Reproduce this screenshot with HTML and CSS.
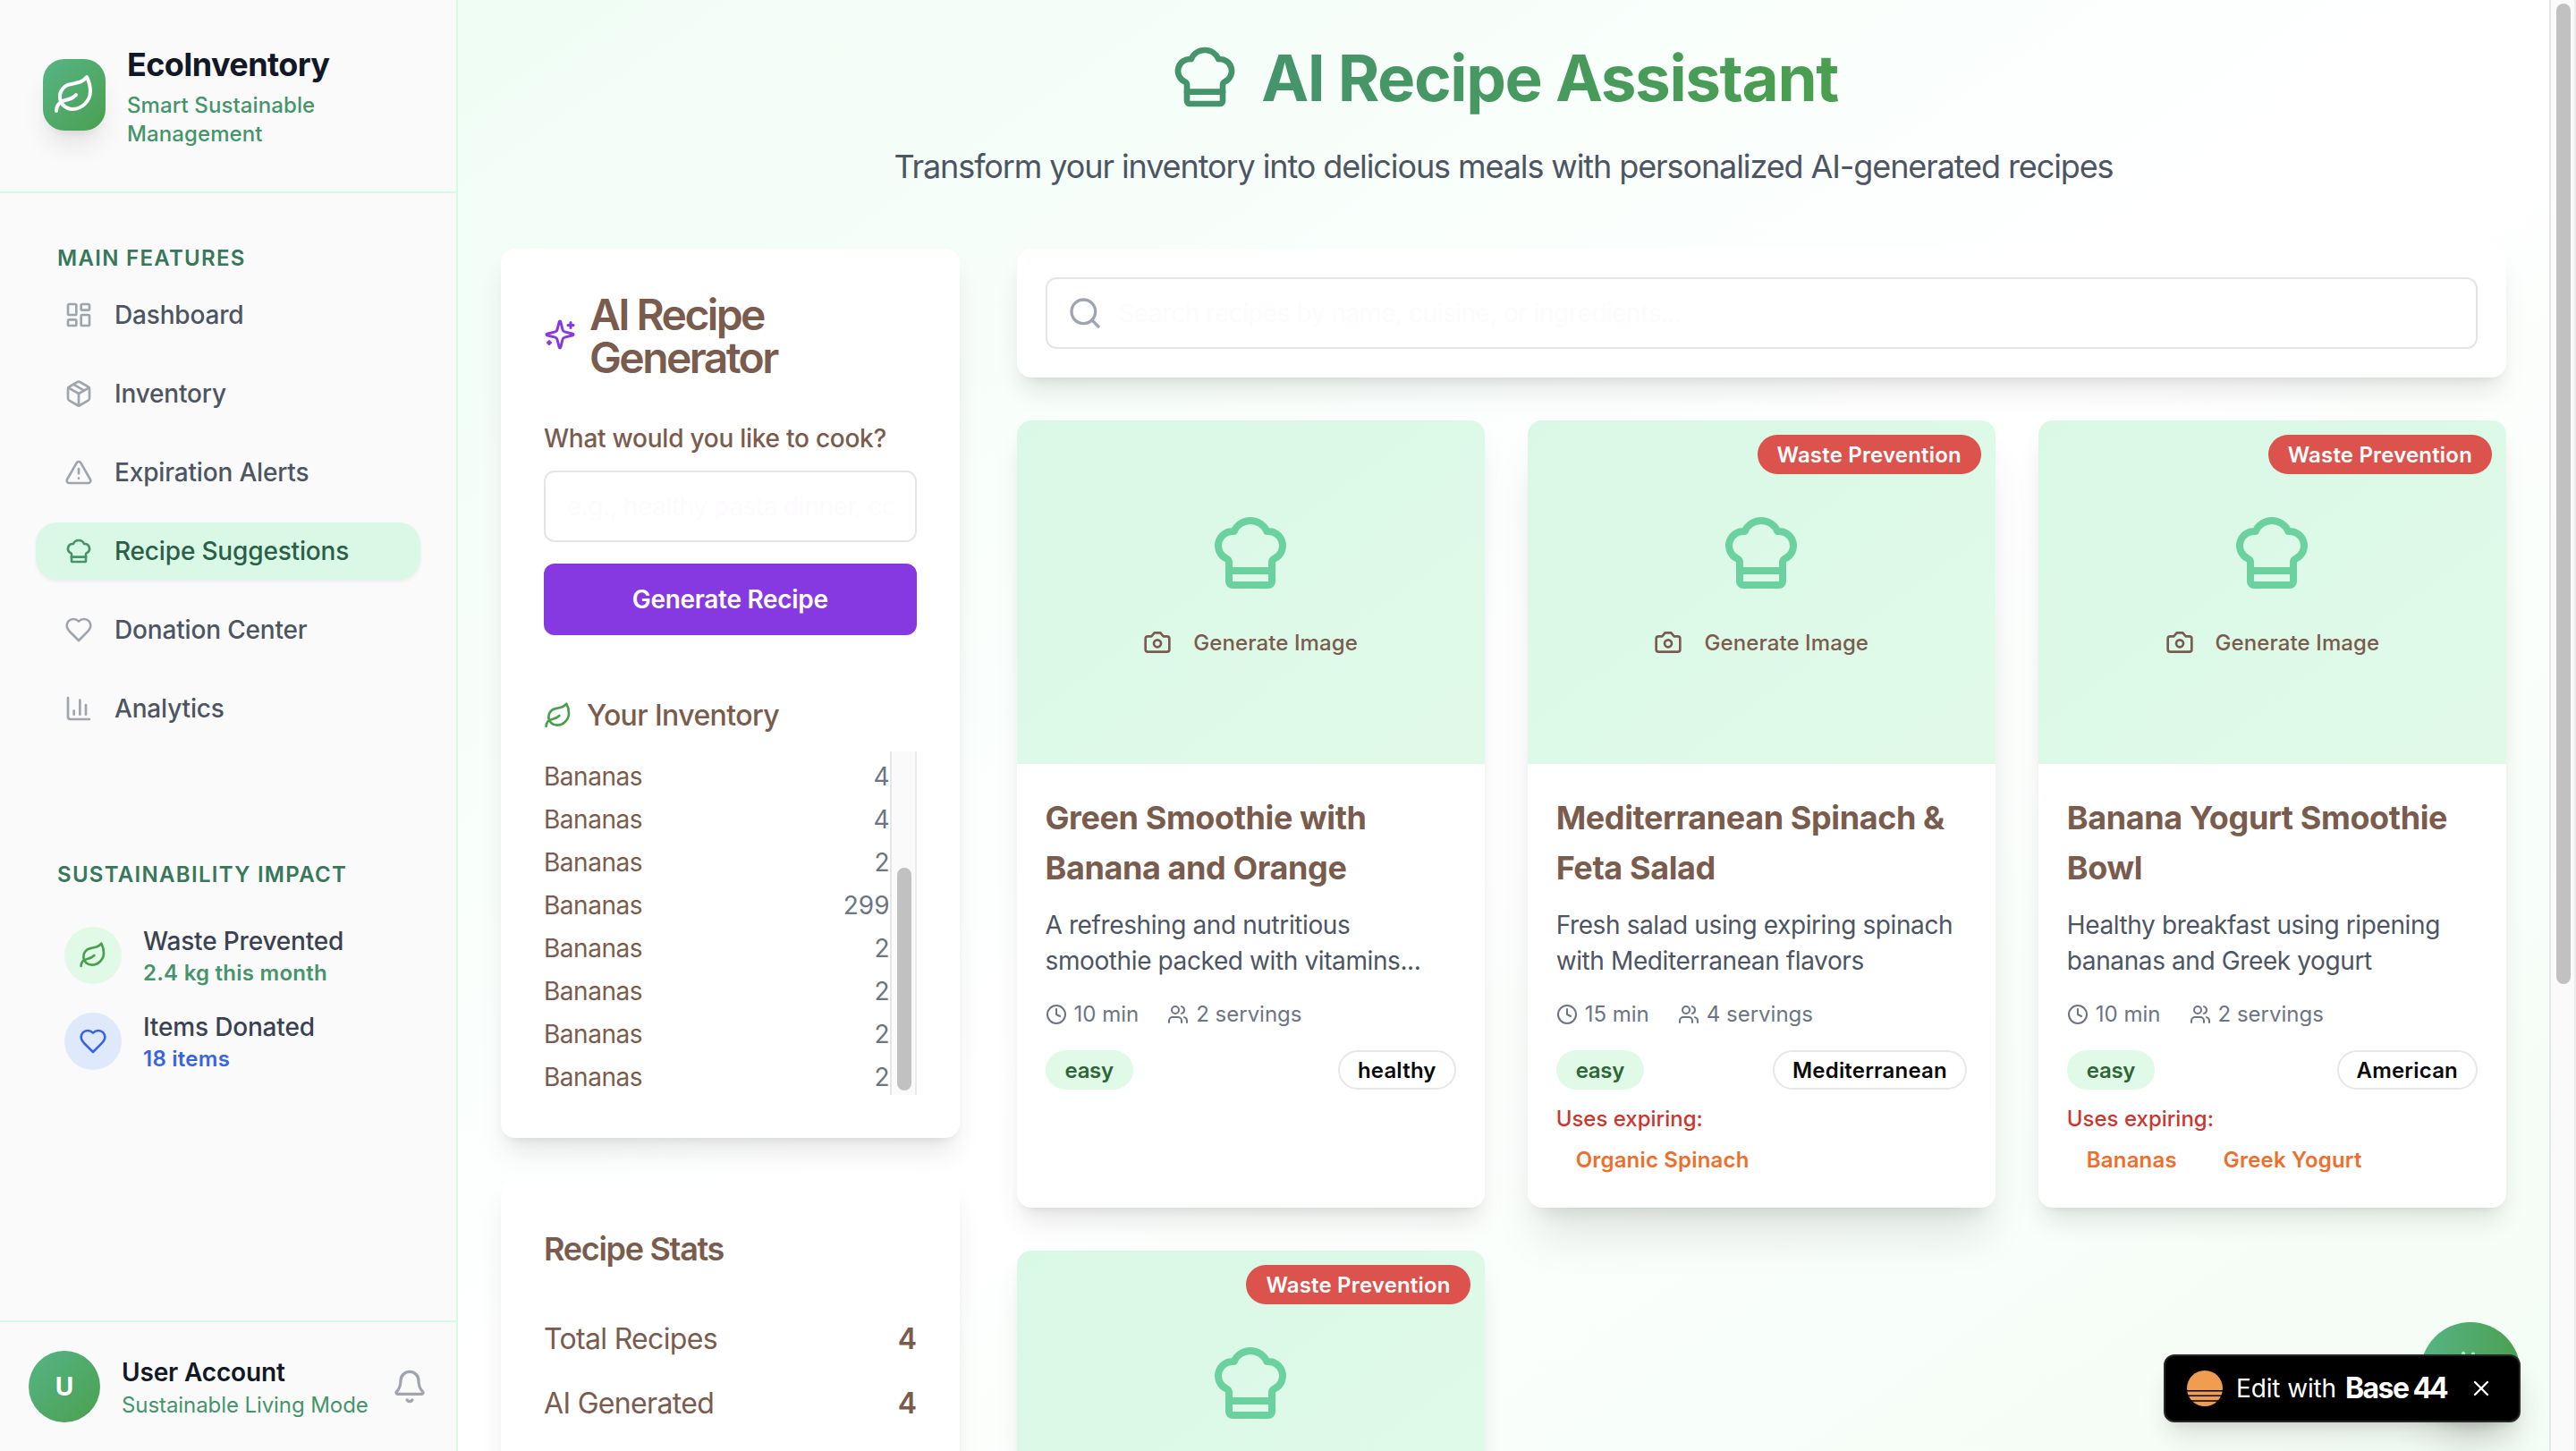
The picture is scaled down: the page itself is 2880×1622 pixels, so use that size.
FILE: index.html
```html
<!DOCTYPE html>
<html lang="en">
<head>
  <meta charset="UTF-8" />
  <meta name="viewport" content="width=device-width, initial-scale=1.0"/>
  <title>EcoInventory - AI Recipe Assistant</title>
  <link rel="stylesheet" href="styles.css">
</head>
<body>
  <!-- Shared icons -->
  <svg class="sprite" aria-hidden="true">
    <symbol id="leaf" viewBox="0 0 24 24"><path d="M11 20A7 7 0 0 1 9.8 6.1C15.5 5 17 4.48 19 2c1 2 2 4.18 2 8 0 5.5-4.78 10-10 10Z"/><path d="M2 21c0-3 1.85-5.36 5.08-6C9.5 14.52 12 13 13 12"/></symbol>
    <symbol id="dashboard" viewBox="0 0 24 24"><rect x="3" y="3" width="7" height="9" rx="1"/><rect x="14" y="3" width="7" height="5" rx="1"/><rect x="14" y="12" width="7" height="9" rx="1"/><rect x="3" y="16" width="7" height="5" rx="1"/></symbol>
    <symbol id="package" viewBox="0 0 24 24"><path d="m7.5 4.27 9 5.15"/><path d="M21 8a2 2 0 0 0-1-1.73l-7-4a2 2 0 0 0-2 0l-7 4A2 2 0 0 0 3 8v8a2 2 0 0 0 1 1.73l7 4a2 2 0 0 0 2 0l7-4A2 2 0 0 0 21 16Z"/><path d="m3.3 7 8.7 5 8.7-5"/><path d="M12 22V12"/></symbol>
    <symbol id="alert" viewBox="0 0 24 24"><path d="m21.73 18-8-14a2 2 0 0 0-3.48 0l-8 14A2 2 0 0 0 4 21h16a2 2 0 0 0 1.73-3"/><path d="M12 9v4"/><path d="M12 17h.01"/></symbol>
    <symbol id="chef" viewBox="0 0 24 24"><path d="M17 21a1 1 0 0 0 1-1v-5.35c0-.457.316-.844.727-1.041a4 4 0 0 0-2.134-7.589 5 5 0 0 0-9.186 0 4 4 0 0 0-2.134 7.588c.411.198.727.585.727 1.041V20a1 1 0 0 0 1 1Z"/><path d="M6 17h12"/></symbol>
    <symbol id="heart" viewBox="0 0 24 24"><path d="M19 14c1.49-1.46 3-3.21 3-5.5A5.5 5.5 0 0 0 16.5 3c-1.76 0-3 .5-4.5 2-1.5-1.5-2.74-2-4.5-2A5.5 5.5 0 0 0 2 8.5c0 2.3 1.5 4.05 3 5.5l7 7Z"/></symbol>
    <symbol id="chart" viewBox="0 0 24 24"><path d="M3 3v16a2 2 0 0 0 2 2h16"/><path d="M18 17V9"/><path d="M13 17V5"/><path d="M8 17v-3"/></symbol>
    <symbol id="bell" viewBox="0 0 24 24"><path d="M10.268 21a2 2 0 0 0 3.464 0"/><path d="M3.262 15.326A1 1 0 0 0 4 17h16a1 1 0 0 0 .74-1.673C19.41 13.956 18 12.499 18 8A6 6 0 0 0 6 8c0 4.499-1.411 5.956-2.738 7.326"/></symbol>
    <symbol id="sparkles" viewBox="0 0 24 24"><path d="M9.937 15.5A2 2 0 0 0 8.5 14.063l-6.135-1.582a.5.5 0 0 1 0-.962L8.5 9.936A2 2 0 0 0 9.937 8.5l1.582-6.135a.5.5 0 0 1 .963 0L14.063 8.5A2 2 0 0 0 15.5 9.937l6.135 1.581a.5.5 0 0 1 0 .964L15.5 14.063a2 2 0 0 0-1.437 1.437l-1.582 6.135a.5.5 0 0 1-.963 0z"/><path d="M20 3v4"/><path d="M22 5h-4"/><path d="M4 17v2"/><path d="M5 18H3"/></symbol>
    <symbol id="search" viewBox="0 0 24 24"><circle cx="11" cy="11" r="8"/><path d="m21 21-4.3-4.3"/></symbol>
    <symbol id="camera" viewBox="0 0 24 24"><path d="M14.5 4h-5L7 7H4a2 2 0 0 0-2 2v9a2 2 0 0 0 2 2h16a2 2 0 0 0 2-2V9a2 2 0 0 0-2-2h-3l-2.5-3z"/><circle cx="12" cy="13" r="3"/></symbol>
    <symbol id="clock" viewBox="0 0 24 24"><circle cx="12" cy="12" r="10"/><path d="M12 6v6l4 2"/></symbol>
    <symbol id="users" viewBox="0 0 24 24"><path d="M16 21v-2a4 4 0 0 0-4-4H6a4 4 0 0 0-4 4v2"/><circle cx="9" cy="7" r="4"/><path d="M22 21v-2a4 4 0 0 0-3-3.87"/><path d="M16 3.13a4 4 0 0 1 0 7.75"/></symbol>
    <symbol id="close" viewBox="0 0 24 24"><path d="M18 6 6 18"/><path d="m6 6 12 12"/></symbol>
  </svg>

  <div class="layout">
    <aside class="sidebar">
      <div class="brand">
        <div class="brand-logo"><svg class="icon"><use href="#leaf"/></svg></div>
        <div>
          <h2>EcoInventory</h2>
          <p>Smart Sustainable<br>Management</p>
        </div>
      </div>

      <div class="sidebar-content">
        <div class="group-label">MAIN FEATURES</div>
        <nav>
          <a class="nav-item"><svg class="icon"><use href="#dashboard"/></svg>Dashboard</a>
          <a class="nav-item"><svg class="icon"><use href="#package"/></svg>Inventory</a>
          <a class="nav-item"><svg class="icon"><use href="#alert"/></svg>Expiration Alerts</a>
          <a class="nav-item active"><svg class="icon"><use href="#chef"/></svg>Recipe Suggestions</a>
          <a class="nav-item"><svg class="icon"><use href="#heart"/></svg>Donation Center</a>
          <a class="nav-item"><svg class="icon"><use href="#chart"/></svg>Analytics</a>
        </nav>

        <div class="group-label impact-label">SUSTAINABILITY IMPACT</div>
        <div class="impact-list">
          <div class="impact">
            <div class="impact-icon green"><svg class="icon"><use href="#leaf"/></svg></div>
            <div>
              <p class="impact-name">Waste Prevented</p>
              <p class="impact-value">2.4 kg this month</p>
            </div>
          </div>
          <div class="impact">
            <div class="impact-icon blue"><svg class="icon"><use href="#heart"/></svg></div>
            <div>
              <p class="impact-name">Items Donated</p>
              <p class="impact-value blue-text">18 items</p>
            </div>
          </div>
        </div>
      </div>

      <div class="account">
        <div class="avatar">U</div>
        <div class="account-info">
          <p class="account-name">User Account</p>
          <p class="account-mode">Sustainable Living Mode</p>
        </div>
        <svg class="icon bell"><use href="#bell"/></svg>
      </div>
    </aside>

    <main>
      <header class="page-header">
        <h1><svg class="icon"><use href="#chef"/></svg><span>AI Recipe Assistant</span></h1>
        <p>Transform your inventory into delicious meals with personalized AI-generated recipes</p>
      </header>

      <div class="columns">
        <div class="left-col">
          <section class="card generator">
            <h3 class="generator-title"><svg class="icon"><use href="#sparkles"/></svg><span>AI Recipe<br>Generator</span></h3>
            <label for="prompt">What would you like to cook?</label>
            <input type="text" id="prompt" placeholder="e.g., healthy pasta dinner, comfort food" />
            <button class="generate-btn">Generate Recipe</button>
            <h4><svg class="icon"><use href="#leaf"/></svg>Your Inventory</h4>
            <div class="inventory">
              <div class="inventory-list">
                <div class="row"><span>Bananas</span><span class="qty">4</span></div>
                <div class="row"><span>Bananas</span><span class="qty">4</span></div>
                <div class="row"><span>Bananas</span><span class="qty">2</span></div>
                <div class="row"><span>Bananas</span><span class="qty">299</span></div>
                <div class="row"><span>Bananas</span><span class="qty">2</span></div>
                <div class="row"><span>Bananas</span><span class="qty">2</span></div>
                <div class="row"><span>Bananas</span><span class="qty">2</span></div>
                <div class="row"><span>Bananas</span><span class="qty">2</span></div>
              </div>
              <div class="track inventory-track"><div class="thumb"></div></div>
            </div>
          </section>

          <section class="card stats">
            <h3>Recipe Stats</h3>
            <div class="stat"><span>Total Recipes</span><b>4</b></div>
            <div class="stat"><span>AI Generated</span><b>4</b></div>
          </section>
        </div>

        <div class="right-col">
          <section class="card search-card">
            <div class="search-box">
              <svg class="icon"><use href="#search"/></svg>
              <input type="text" placeholder="Search recipes by name, cuisine, or ingredients..." />
            </div>
          </section>

          <div class="recipes">
            <article class="card recipe">
              <div class="photo">
                <svg class="icon hat"><use href="#chef"/></svg>
                <button class="image-btn"><svg class="icon"><use href="#camera"/></svg>Generate Image</button>
              </div>
              <div class="recipe-body">
                <h3>Green Smoothie with<br>Banana and Orange</h3>
                <p class="desc">A refreshing and nutritious<br>smoothie packed with vitamins...</p>
                <div class="meta">
                  <span><svg class="icon"><use href="#clock"/></svg>10 min</span>
                  <span><svg class="icon"><use href="#users"/></svg>2 servings</span>
                </div>
                <div class="tags"><span class="badge easy">easy</span><span class="badge outline">healthy</span></div>
              </div>
            </article>

            <article class="card recipe hovered">
              <div class="photo">
                <span class="badge waste">Waste Prevention</span>
                <svg class="icon hat"><use href="#chef"/></svg>
                <button class="image-btn"><svg class="icon"><use href="#camera"/></svg>Generate Image</button>
              </div>
              <div class="recipe-body">
                <h3>Mediterranean Spinach &amp;<br>Feta Salad</h3>
                <p class="desc">Fresh salad using expiring spinach<br>with Mediterranean flavors</p>
                <div class="meta">
                  <span><svg class="icon"><use href="#clock"/></svg>15 min</span>
                  <span><svg class="icon"><use href="#users"/></svg>4 servings</span>
                </div>
                <div class="tags"><span class="badge easy">easy</span><span class="badge outline">Mediterranean</span></div>
                <p class="expiring">Uses expiring:</p>
                <div class="expiring-items"><span class="badge">Organic Spinach</span></div>
              </div>
            </article>

            <article class="card recipe">
              <div class="photo">
                <span class="badge waste">Waste Prevention</span>
                <svg class="icon hat"><use href="#chef"/></svg>
                <button class="image-btn"><svg class="icon"><use href="#camera"/></svg>Generate Image</button>
              </div>
              <div class="recipe-body">
                <h3>Banana Yogurt Smoothie<br>Bowl</h3>
                <p class="desc">Healthy breakfast using ripening<br>bananas and Greek yogurt</p>
                <div class="meta">
                  <span><svg class="icon"><use href="#clock"/></svg>10 min</span>
                  <span><svg class="icon"><use href="#users"/></svg>2 servings</span>
                </div>
                <div class="tags"><span class="badge easy">easy</span><span class="badge outline">American</span></div>
                <p class="expiring">Uses expiring:</p>
                <div class="expiring-items"><span class="badge">Bananas</span><span class="badge">Greek Yogurt</span></div>
              </div>
            </article>

            <article class="card recipe">
              <div class="photo">
                <span class="badge waste">Waste Prevention</span>
                <svg class="icon hat"><use href="#chef"/></svg>
                <div class="image-btn"></div>
              </div>
            </article>
          </div>
        </div>
      </div>
    </main>

    <div class="track page-track"><div class="thumb"></div></div>
  </div>

  <button class="fab">
    <svg viewBox="0 0 24 24"><path d="M8 1.4 9 5"/><path d="M13.5 1.8 13 5"/></svg>
  </button>

  <div class="edit-badge">
    <svg class="edit-logo" viewBox="0 0 40 40">
      <circle cx="20" cy="20" r="20" fill="#f09d51"/>
      <path d="M0 22.7h40M0 28.3h40M0 33.9h40" stroke="#000" stroke-width="1.5"/>
    </svg>
    <span class="edit-text">Edit with</span>
    <span class="edit-brand">Base<span>44</span></span>
    <svg class="icon edit-close"><use href="#close"/></svg>
  </div>
</body>
</html>
```
FILE: styles.css
```css
* {
  box-sizing: border-box;
}
body {
  font-family: Inter, "Liberation Sans", sans-serif;
  font-size: 28px;
  line-height: 40px;
  margin: 0;
  height: 100vh;
  overflow: hidden;
  color: #7a5c4e;
}
h1, h2, h3, h4, p {
  margin: 0;
}
button, input {
  font-family: inherit;
  font-size: 28px;
}
.sprite {
  display: none;
}
.icon {
  width: 32px;
  height: 32px;
  flex-shrink: 0;
  fill: none;
  stroke: currentColor;
  stroke-width: 2;
  stroke-linecap: round;
  stroke-linejoin: round;
}
.layout {
  display: flex;
  height: 100vh;
  overflow: hidden;
}

/* Sidebar */
.sidebar {
  width: 512px;
  flex-shrink: 0;
  display: flex;
  flex-direction: column;
  background: #fafafa;
  border-right: 2px solid #d9f8e6;
}
.brand {
  display: flex;
  align-items: center;
  gap: 24px;
  height: 216px;
  padding: 46px 48px 48px;
  border-bottom: 2px solid #d9f8e6;
}
.brand-logo {
  width: 70px;
  height: 80px;
  flex-shrink: 0;
  display: flex;
  align-items: center;
  justify-content: center;
  border-radius: 24px;
  color: white;
  background: linear-gradient(135deg, #56b586, #4a9f4f);
  box-shadow: 0 20px 30px -6px rgba(0,0,0,0.1), 0 8px 12px -8px rgba(0,0,0,0.1);
}
.brand-logo .icon {
  width: 48px;
  height: 48px;
}
.brand h2 {
  font-size: 36px;
  line-height: 52px;
  font-weight: 700;
  letter-spacing: -0.6px;
  color: #131826;
}
.brand p {
  margin-top: 4px;
  font-size: 24px;
  line-height: 32px;
  font-weight: 500;
  letter-spacing: 0.1px;
  color: #45946c;
}
.sidebar-content {
  flex: 1;
  padding: 40px;
}
.group-label {
  height: 64px;
  padding: 0 24px;
  line-height: 66px;
  font-size: 24px;
  font-weight: 600;
  letter-spacing: 1.3px;
  color: #37785a;
}
.nav-item {
  display: flex;
  align-items: center;
  gap: 24px;
  height: 64px;
  margin-bottom: 24px;
  padding: 0 32px;
  border-radius: 24px;
  font-weight: 500;
  letter-spacing: -0.17px;
  color: #4d5562;
}
.nav-item .icon {
  color: #9fa4ae;
}
.nav-item.active {
  background: #d9f8e6;
  color: #2b5f48;
  box-shadow: 0 2px 4px rgba(0,0,0,0.06);
}
.nav-item.active .icon {
  color: #45946c;
}
.impact-label {
  margin-top: 121px;
}
.impact-list {
  display: flex;
  flex-direction: column;
  gap: 24px;
  padding: 23px 32px;
}
.impact {
  display: flex;
  align-items: center;
  gap: 24px;
}
.impact-icon {
  width: 64px;
  height: 64px;
  display: flex;
  align-items: center;
  justify-content: center;
  border-radius: 50%;
}
.green {
  background: #e1fae8;
  color: #4a9f4f;
}
.blue {
  background: #dee9fc;
  color: #3a63e4;
}
.impact-name {
  font-weight: 500;
  letter-spacing: -0.17px;
  color: #3a4251;
}
.impact-value {
  font-size: 24px;
  line-height: 32px;
  font-weight: 600;
  letter-spacing: 0.25px;
  color: #45946c;
}
.blue-text {
  color: #3a63e4;
}
.account {
  display: flex;
  align-items: center;
  height: 146px;
  padding: 0 32px;
  border-top: 2px solid #d9f8e6;
}
.avatar {
  width: 80px;
  height: 80px;
  border-radius: 50%;
  background: linear-gradient(135deg, #56b586, #4a9f4f);
  color: white;
  font-weight: 700;
  line-height: 80px;
  text-align: center;
}
.account-info {
  flex: 1;
  padding-left: 24px;
}
.account-name {
  font-weight: 600;
  letter-spacing: -0.15px;
  color: #131826;
}
.account-mode {
  font-size: 24px;
  line-height: 33px;
  letter-spacing: -0.08px;
  color: #45946c;
}
.bell {
  width: 40px;
  height: 40px;
  color: #9fa4ae;
}

/* Main */
main {
  flex: 1;
  min-width: 0;
  padding: 46px 48px;
  background: linear-gradient(to bottom right, #effdf5, #fff 50%, #f3fdf5);
}
.page-header {
  text-align: center;
  margin-bottom: 64px;
}
h1 {
  display: flex;
  align-items: center;
  justify-content: center;
  gap: 23px;
  height: 80px;
  margin-bottom: 32px;
  font-size: 71px;
  font-weight: 700;
  letter-spacing: -1.4px;
}
h1 .icon {
  width: 80px;
  height: 80px;
  color: #45946c;
}
h1 span {
  padding-top: 2px;
  line-height: 88px;
  background: linear-gradient(to right, #45946c, #4a9f4f);
  -webkit-background-clip: text;
  background-clip: text;
  color: transparent;
}
.page-header p {
  font-size: 36px;
  line-height: 56px;
  letter-spacing: -1.1px;
  color: #4d5562;
}
.columns {
  display: grid;
  grid-template-columns: repeat(4, 1fr);
  gap: 64px;
}
.card {
  background: white;
  border-radius: 16px;
  box-shadow: 0 20px 30px -6px rgba(0,0,0,0.1), 0 8px 12px -8px rgba(0,0,0,0.1);
}
.left-col {
  display: flex;
  flex-direction: column;
  gap: 48px;
}
.generator, .stats {
  padding: 48px;
}
.stats {
  min-height: 420px;
}
.generator-title {
  display: flex;
  align-items: center;
  gap: 15px;
  margin-bottom: 48px;
  font-size: 48px;
  line-height: 48px;
  font-weight: 600;
  letter-spacing: -2.6px;
}
.generator-title .icon {
  width: 36px;
  height: 36px;
  color: #8639e0;
}
.generator-title span {
  padding-top: 2px;
  margin-bottom: -2px;
}
.generator label {
  display: block;
  margin-bottom: 16px;
  font-weight: 500;
  letter-spacing: -0.25px;
}
input {
  display: block;
  width: 100%;
  height: 80px;
  padding: 0 24px;
  border: 2px solid #e5e5e5;
  border-radius: 12px;
  background: white;
  letter-spacing: -0.45px;
}
input::placeholder {
  color: #fefbfe;
}
.generate-btn {
  width: 100%;
  height: 80px;
  margin: 24px 0 66px;
  border: none;
  border-radius: 12px;
  background: #8639e0;
  color: white;
  font-weight: 600;
  letter-spacing: -0.3px;
}
h4 {
  display: flex;
  align-items: center;
  gap: 16px;
  margin-bottom: 16px;
  font-size: 32px;
  line-height: 48px;
  font-weight: 500;
  letter-spacing: -0.6px;
}
h4 .icon {
  color: #4a9f4f;
}
.inventory {
  display: flex;
  height: 384px;
}
.inventory-list {
  flex: 1;
  display: flex;
  flex-direction: column;
  justify-content: flex-end;
  gap: 8px;
}
.row, .stat {
  display: flex;
  justify-content: space-between;
}
.row {
  letter-spacing: -0.48px;
}
.qty {
  letter-spacing: 0;
  color: #6d7482;
}
.track {
  width: 30px;
  flex-shrink: 0;
  border-left: 2px solid #e6e6e6;
  border-right: 2px solid #ececec;
  background: #fafafa;
}
.thumb {
  width: 16px;
  margin-left: 6px;
  border-radius: 8px;
  background: #c1c1c1;
}
.inventory-track {
  padding-top: 130px;
}
.inventory-track .thumb {
  height: 249px;
}
.page-track {
  padding-top: 4px;
}
.page-track .thumb {
  height: 1096px;
}
.stats h3 {
  margin-bottom: 49px;
  font-size: 36px;
  line-height: 56px;
  font-weight: 600;
  letter-spacing: -1.3px;
}
.stat {
  margin-bottom: 24px;
  font-size: 32px;
  line-height: 48px;
  letter-spacing: -0.67px;
}
.stat b {
  font-weight: 600;
}

/* Recipes */
.right-col {
  grid-column: span 3;
}
.search-card {
  padding: 32px;
  margin-bottom: 48px;
}
.search-box {
  position: relative;
}
.search-box .icon {
  position: absolute;
  left: 24px;
  top: 20px;
  width: 40px;
  height: 40px;
  color: #9fa4ae;
}
.search-box input {
  padding-left: 80px;
}
.recipes {
  display: grid;
  grid-template-columns: repeat(3, 1fr);
  gap: 48px;
}
.recipe {
  overflow: hidden;
}
.recipe.hovered {
  box-shadow: 0 40px 50px -10px rgba(0,0,0,0.1), 0 16px 20px -12px rgba(0,0,0,0.1);
}
.photo {
  position: relative;
  height: 384px;
  display: flex;
  flex-direction: column;
  align-items: center;
  justify-content: center;
  gap: 16px;
  background: linear-gradient(to bottom right, #d9f8e6, #e1fae8);
}
.hat {
  width: 96px;
  height: 96px;
  color: #6bd29f;
}
.image-btn {
  display: flex;
  align-items: center;
  gap: 24px;
  height: 72px;
  border: none;
  background: none;
  color: #7a5c4e;
  font-size: 24px;
  font-weight: 500;
  letter-spacing: 0.1px;
}
.badge {
  height: 44px;
  padding: 0 20px;
  border: 2px solid transparent;
  border-radius: 22px;
  font-size: 24px;
  line-height: 42px;
  font-weight: 600;
  letter-spacing: 0.18px;
}
.waste {
  position: absolute;
  top: 16px;
  right: 16px;
  background: #dc524c;
  color: white;
}
.recipe-body {
  padding: 32px;
}
.recipe-body h3 {
  margin-bottom: 16px;
  font-size: 36px;
  line-height: 56px;
  font-weight: 700;
  letter-spacing: -0.4px;
}
.desc {
  letter-spacing: -0.39px;
  color: #4d5562;
}
.meta {
  display: flex;
  gap: 32px;
  margin: 24px 0;
  font-size: 24px;
  line-height: 32px;
  color: #6d7482;
}
.meta span {
  display: flex;
  align-items: center;
  gap: 8px;
}
.meta .icon {
  width: 24px;
  height: 24px;
}
.tags {
  display: flex;
  justify-content: space-between;
}
.easy {
  background: #e1fae8;
  color: #2f6537;
  letter-spacing: -0.3px;
}
.outline {
  border-color: #e5e7eb;
  color: #0a0a0a;
}
.expiring {
  margin: 17px 0 7px;
  font-size: 24px;
  line-height: 32px;
  font-weight: 500;
  color: #c9382f;
}
.expiring-items {
  display: flex;
  gap: 8px;
}
.expiring-items .badge {
  color: #ee6f2d;
}

/* Floating items */
.fab {
  position: absolute;
  right: 62px;
  bottom: 32px;
  width: 112px;
  height: 112px;
  padding: 32px;
  border: none;
  border-radius: 50%;
  background: linear-gradient(to right, #56b586, #4a9f4f);
  box-shadow: 0 40px 50px -10px rgba(0,0,0,0.1), 0 16px 20px -12px rgba(0,0,0,0.1);
}
.fab svg {
  display: block;
  width: 48px;
  height: 48px;
  fill: none;
  stroke: #a5ecc5;
  stroke-width: 2;
  stroke-linecap: round;
}
.edit-badge {
  position: absolute;
  right: 62px;
  bottom: 32px;
  width: 399px;
  height: 76px;
  display: flex;
  align-items: center;
  padding: 0 28px 0 24px;
  border: 2px solid #262626;
  border-radius: 12px;
  background: black;
  color: white;
  box-shadow: 0 20px 30px -6px rgba(0,0,0,0.12), 0 8px 12px -8px rgba(0,0,0,0.1);
}
.edit-logo {
  width: 40px;
  height: 40px;
}
.edit-text {
  margin: 0 10px 0 15px;
  letter-spacing: -0.13px;
}
.edit-brand {
  font-size: 32px;
  font-weight: 700;
  letter-spacing: -1.6px;
}
.edit-brand span {
  margin-left: 5px;
  letter-spacing: -3px;
}
.edit-close {
  width: 28px;
  height: 28px;
  margin-left: auto;
}
```
